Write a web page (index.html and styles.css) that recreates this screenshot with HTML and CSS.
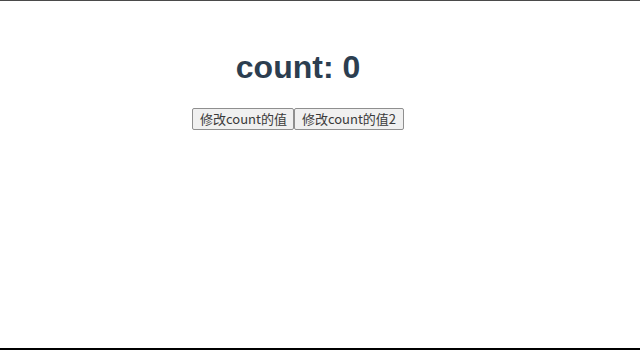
FILE: index.html
```html
<!DOCTYPE html>
<html>
<head>
  <meta charset="UTF-8">
  <link rel="stylesheet" href="styles.css">
</head>
<body>
  <div class="frame">
    <div id="app">
      <h1 class="count">count: 0</h1>
      <div class="actions"><button class="btn">修改count的值</button><button class="btn">修改count的值2</button></div>
    </div>
  </div>
</body>
</html>
```

FILE: styles.css
```css
html,
body {
  margin: 0;
  padding: 0;
  background: #fff;
}

.frame {
  box-sizing: border-box;
  height: 350px;
  border-top: 1px solid #4a4a4a;
  border-bottom: 2px solid #000;
}

#app {
  width: 596px;
  text-align: center;
  font-family: "Liberation Sans", Arial, sans-serif;
  color: #2c3e50;
}

.count {
  font-size: 32px;
  font-weight: bold;
  margin: 48px 0 22px 0;
  line-height: normal;
}

.actions {
  display: flex;
  justify-content: center;
}

.btn {
  height: 22px;
  padding: 0 6.5px;
  margin: 0;
  font-family: "Noto Sans CJK SC", sans-serif;
  font-size: 13px;
  color: #3a3a3a;
  background: #f0f0f0;
  border: 1px solid #8f8f8f;
  border-radius: 2px;
  line-height: 20px;
}
```
